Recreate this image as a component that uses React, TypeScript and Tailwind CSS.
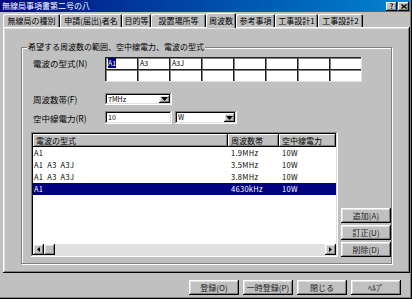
import React from 'react'

const raised =
  'shadow-[inset_-1px_-1px_#000,inset_1px_1px_#fff,inset_-2px_-2px_#808080,inset_2px_2px_#dfdfdf]'
const raisedThin = 'shadow-[inset_-1px_-1px_#000,inset_1px_1px_#fff,inset_-2px_-2px_#808080]'
const sunken =
  'shadow-[inset_-1px_-1px_#fff,inset_1px_1px_#808080,inset_-2px_-2px_#dfdfdf,inset_2px_2px_#000]'

const tabs = [
  { label: '無線局の種別', w: 'w-[57px]' },
  { label: '申請(届出)者名', w: 'w-[62px]' },
  { label: '目的等', w: 'w-[29px]' },
  { label: '設置場所等', w: 'w-[55px]' },
  { label: '周波数', w: 'w-[30px]', active: true },
  { label: '参考事項', w: 'w-[39px]' },
  { label: '工事設計1', w: 'w-[43px]' },
  { label: '工事設計2', w: 'w-[45px]' },
]

const modes = [
  ['A1', 'A3', 'A3J', '', '', '', '', ''],
  ['', '', '', '', '', '', '', ''],
]

const rows = [
  { mode: 'A1', freq: '1.9MHz', power: '10W' },
  { mode: 'A1 A3 A3J', freq: '3.5MHz', power: '10W' },
  { mode: 'A1 A3 A3J', freq: '3.8MHz', power: '10W' },
  { mode: 'A1', freq: '4630kHz', power: '10W', selected: true },
]

function DownArrow() {
  return (
    <div className={`w-[11px] h-full bg-[#c0c0c0] flex items-center justify-center ${raised}`}>
      <svg width="7" height="4" viewBox="0 0 7 4">
        <polygon points="0,0 7,0 3.5,4" fill="#000" />
      </svg>
    </div>
  )
}

function Combo({ value, w }: { value: string; w: string }) {
  return (
    <div className={`${w} h-full bg-white flex items-stretch p-[2px] ${sunken}`}>
      <span className="flex-1 pl-[1px] leading-[9px] text-[7px]">{value}</span>
      <DownArrow />
    </div>
  )
}

function Btn({ label, w = 'w-[50px]' }: { label: string; w?: string }) {
  return (
    <div className={`${w} h-[15px] flex items-center justify-center text-[8px] text-[#202020] ${raised}`}>
      {label}
    </div>
  )
}

export default function App() {
  return (
    <div className="w-[412px] h-[299px] bg-[#c0c0c0] flex flex-col pr-[2px] pb-[2px] overflow-hidden font-['Noto_Sans_CJK_JP','Noto_Sans',sans-serif] text-black shadow-[inset_-1px_-1px_#000,inset_-2px_-2px_#808080]">
      {/* title bar */}
      <div className="h-[12px] flex items-center justify-between bg-linear-to-r from-[#000080] to-[#1084d0] pl-[2px] pr-[1px]">
        <span className="text-white text-[8px] leading-none">無線局事項書第二号の八</span>
        <div className="flex gap-[1px]">
          <div className={`w-[11px] h-[9px] bg-[#c0c0c0] flex items-center justify-center text-[7px] font-bold leading-none ${raisedThin}`}>
            ?
          </div>
          <div className={`w-[11px] h-[9px] bg-[#c0c0c0] flex items-center justify-center ${raisedThin}`}>
            <svg width="6" height="5" viewBox="0 0 6 5">
              <path d="M0.5 0.5 L5.5 4.5 M5.5 0.5 L0.5 4.5" stroke="#000" strokeWidth="1.4" />
            </svg>
          </div>
        </div>
      </div>

      {/* tabs */}
      <div className="mt-[2px] h-[13px] flex items-end pl-[3px]">
        {tabs.map((t) =>
          t.active ? (
            <div
              key={t.label}
              className={`${t.w} h-[15px] -mb-[1px] relative z-10 bg-[#c0c0c0] rounded-t-[2px] flex items-center justify-center text-[8px] leading-none shadow-[inset_1px_1px_#fff,inset_-1px_0_#000,inset_-2px_0_#808080]`}
            >
              {t.label}
            </div>
          ) : (
            <div
              key={t.label}
              className={`${t.w} h-[13px] rounded-t-[2px] flex items-center justify-center text-[8px] leading-none whitespace-nowrap shadow-[inset_1px_1px_#fff,inset_-1px_0_#000,inset_-2px_0_#808080]`}
            >
              {t.label}
            </div>
          ),
        )}
      </div>

      {/* tab panel */}
      <div className={`ml-[3px] h-[246px] pt-[20px] pl-[18px] ${raised}`}>
        <div className="relative w-[371px] border border-[#808080] shadow-[1px_1px_#fff,inset_1px_1px_#fff] pt-[9px] pl-[9px] pb-[6px]">
          <span className="absolute left-[5px] -top-[6px] px-[1px] bg-[#c0c0c0] text-[8px] leading-[10px]">
            希望する周波数の範囲、空中線電力、電波の型式
          </span>

          {/* 電波の型式 */}
          <div className="flex items-start">
            <span className="w-[74px] pl-[2px] h-[12px] text-[8.5px] leading-[12px]">電波の型式(N)</span>
            <div className="flex flex-col border-r border-b border-[#dfdfdf]">
              {modes.map((r, ri) => (
                <div key={ri} className="flex">
                  {r.map((v, ci) => (
                    <div
                      key={ci}
                      className="w-[32px] h-[12px] bg-white shadow-[inset_1px_1px_#202020,inset_2px_2px_#808080] pl-[3px] pt-[2px] text-[7px] leading-[9px]"
                    >
                      {ri === 0 && ci === 0 ? (
                        <span className="bg-[#000080] text-white">{v}</span>
                      ) : (
                        v
                      )}
                    </div>
                  ))}
                </div>
              ))}
            </div>
          </div>

          {/* 周波数帯 */}
          <div className="flex items-center mt-[11px] h-[12px]">
            <span className="w-[74px] pl-[2px] text-[8.5px] leading-[12px]">周波数帯(F)</span>
            <Combo value="7MHz" w="w-[67px]" />
          </div>

          {/* 空中線電力 */}
          <div className="flex items-center mt-[6px] h-[13px]">
            <span className="w-[74px] pl-[2px] text-[8.5px] leading-[12px]">空中線電力(R)</span>
            <div className={`w-[67px] h-full bg-white p-[2px] pl-[3px] text-[7px] leading-[9px] ${sunken}`}>10</div>
            <div className="ml-[3px] h-full">
              <Combo value="W" w="w-[62px]" />
            </div>
          </div>

          {/* list + buttons */}
          <div className="flex items-end mt-[8px]">
            <div className={`w-[307px] h-[125px] bg-white p-[2px] flex flex-col ${sunken}`}>
              <div className="flex h-[13px] bg-[#c0c0c0] text-[8px] leading-[13px]">
                <div className={`w-[195px] pl-[3px] ${raisedThin}`}>電波の型式</div>
                <div className={`w-[51px] pl-[3px] ${raisedThin}`}>周波数帯</div>
                <div className={`w-[57px] pl-[3px] ${raisedThin}`}>空中線電力</div>
              </div>
              <div className="flex-1">
                {rows.map((r, i) => (
                  <div
                    key={i}
                    className={`flex h-[12px] text-[7.5px] leading-[12px] whitespace-pre tracking-[0.3px] ${
                      r.selected ? 'bg-[#000080] text-white' : 'text-black'
                    }`}
                  >
                    <div className="w-[195px] pl-[1px] [word-spacing:2px]">{r.mode}</div>
                    <div className="w-[51px] pl-[3px]">{r.freq}</div>
                    <div className="w-[57px] pl-[3px]">{r.power}</div>
                  </div>
                ))}
              </div>
              <div className="h-[11px] flex bg-[#e0e0e0]">
                <div className={`w-[11px] h-full bg-[#c0c0c0] flex items-center justify-center ${raised}`}>
                  <svg width="3" height="5" viewBox="0 0 3 5">
                    <polygon points="3,0 3,5 0,2.5" fill="#000" />
                  </svg>
                </div>
                <div className={`w-[11px] h-full bg-[#c0c0c0] ${raised}`} />
                <div className="flex-1" />
                <div className={`w-[11px] h-full bg-[#c0c0c0] flex items-center justify-center ${raised}`}>
                  <svg width="3" height="5" viewBox="0 0 3 5">
                    <polygon points="0,0 0,5 3,2.5" fill="#000" />
                  </svg>
                </div>
              </div>
            </div>
            <div className="ml-[3px] flex flex-col gap-[2px]">
              <Btn label="追加(A)" />
              <Btn label="訂正(U)" />
              <Btn label="削除(D)" />
            </div>
          </div>
        </div>
      </div>

      {/* bottom buttons */}
      <div className="mt-[7px] flex justify-end gap-[4px] pr-[9px]">
        <Btn label="登録(O)" />
        <Btn label="一時登録(P)" />
        <Btn label="閉じる" />
        <Btn label="ﾍﾙﾌﾟ" />
      </div>
    </div>
  )
}
